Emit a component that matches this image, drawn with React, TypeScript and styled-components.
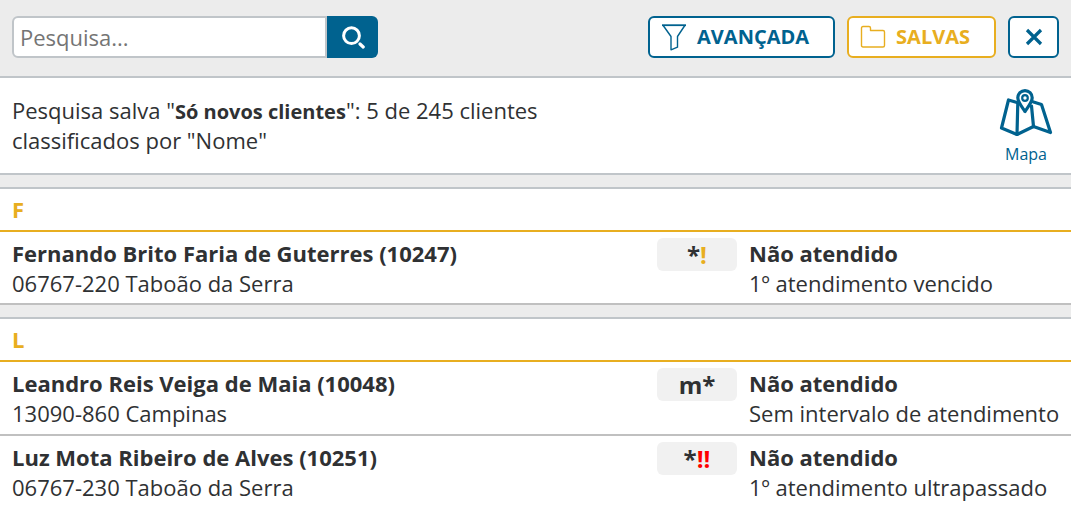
import React from "react";
import styled, { createGlobalStyle } from "styled-components";

const blue = "#00628f";
const gold = "#e8ae20";
const line = "#c0c5c9";

const GlobalStyle = createGlobalStyle`
  * { box-sizing: border-box; }
  body {
    margin: 0;
    background: #ececec;
    color: #2f3133;
    font: 22px/30px "Open Sans", "Noto Sans", sans-serif;
    overflow-x: hidden;
  }
`;

const Toolbar = styled.header`
  display: flex;
  justify-content: space-between;
  gap: 12px;
  padding: 16px 12px 18px;
  border-bottom: 2px solid ${line};
`;

const SearchForm = styled.form`
  display: flex;
  flex: 0 1 366px;
  min-width: 0;
  height: 42px;
`;

const SearchInput = styled.input`
  flex: 1;
  min-width: 0;
  padding: 0 6px;
  border: 2px solid ${line};
  border-radius: 6px 0 0 6px;
  background: #fff;
  color: inherit;
  font: inherit;
  &::placeholder { color: #757575; }
`;

const SearchButton = styled.button`
  display: flex;
  align-items: center;
  justify-content: center;
  width: 51px;
  padding: 0;
  border: 0;
  border-radius: 0 6px 6px 0;
  background: ${blue};
  color: #fff;
`;

const Actions = styled.div`
  display: flex;
  gap: 12px;
`;

const ActionButton = styled.button<{ $color: string; $compact?: boolean }>`
  display: flex;
  align-items: center;
  justify-content: center;
  gap: 10px;
  height: 42px;
  width: ${(p) => (p.$compact ? "51px" : "auto")};
  padding: ${(p) => (p.$compact ? "0" : "0 24px 0 11px")};
  border: 2px solid ${(p) => p.$color};
  border-radius: 6px;
  background: #fff;
  color: ${(p) => p.$color};
  font: bold 20px/30px "Open Sans", "Noto Sans", sans-serif;
`;

const Summary = styled.section`
  display: flex;
  justify-content: space-between;
  align-items: flex-start;
  padding: 11px 12px 6px;
  border-bottom: 2px solid ${line};
  background: #fff;
`;

const SummaryText = styled.p`
  max-width: 560px;
  margin: 6px 0 0;
  strong {
    font-size: 20px;
    line-height: 20px;
  }
`;

const MapLink = styled.a`
  display: flex;
  flex-direction: column;
  align-items: center;
  gap: 2px;
  width: 66px;
  color: ${blue};
  font-size: 16px;
  line-height: 26px;
  text-decoration: none;
`;

const Group = styled.section`
  margin-top: 12px;
  border-top: 2px solid ${line};
  border-bottom: 2px solid #c0c0c0;
  background: #fff;
`;

const GroupTitle = styled.h2`
  margin: 0;
  padding: 5px 12px 6px;
  border-bottom: 2px solid ${gold};
  color: ${gold};
  font-size: 22px;
  line-height: 30px;
`;

const ClientList = styled.ul`
  margin: 0;
  padding: 0;
  list-style: none;
`;

const ClientRow = styled.li`
  display: grid;
  grid-template-columns: minmax(0, 1fr) 80px 310px;
  column-gap: 12px;
  padding: 6px 12px 5px;
  & + & { border-top: 2px solid #c0c0c0; }
  &:not(:last-child) { padding-bottom: 6px; }
`;

const Info = styled.div`
  white-space: nowrap;
`;

const Heading = styled.div`
  font-weight: bold;
`;

const Badge = styled.div`
  height: 33px;
  border-radius: 6px;
  background: #f1f1f1;
  font-size: 24px;
  font-weight: bold;
  line-height: 34px;
  text-align: center;
`;

const Mark = styled.span<{ $color: string }>`
  color: ${(p) => p.$color};
`;

interface Client {
  name: string;
  place: string;
  flags: string;
  alert?: string;
  alertColor?: string;
  detail: string;
}

const groups: { letter: string; clients: Client[] }[] = [
  {
    letter: "F",
    clients: [
      { name: "Fernando Brito Faria de Guterres (10247)", place: "06767-220 Taboão da Serra", flags: "*", alert: "!", alertColor: gold, detail: "1º atendimento vencido" },
    ],
  },
  {
    letter: "L",
    clients: [
      { name: "Leandro Reis Veiga de Maia (10048)", place: "13090-860 Campinas", flags: "m*", detail: "Sem intervalo de atendimento" },
      { name: "Luz Mota Ribeiro de Alves (10251)", place: "06767-230 Taboão da Serra", flags: "*", alert: "!!", alertColor: "#ff0000", detail: "1º atendimento ultrapassado" },
    ],
  },
];

const SearchIcon = () => (
  <svg width="24" height="24" viewBox="0 0 24 24" fill="none" stroke="currentColor" aria-hidden="true">
    <circle cx="10.5" cy="10.7" r="7.9" strokeWidth="3" />
    <path d="M19 19 22.2 22" strokeWidth="3.2" strokeLinecap="round" />
  </svg>
);

const FunnelIcon = () => (
  <svg width="26" height="28" viewBox="0 0 26 28" fill="none" stroke="currentColor" strokeWidth="1.4" aria-hidden="true">
    <path d="M1 2.2H25" strokeWidth="1.8" />
    <path d="M2.2 2.5 10 13.5V26.8L16.5 24.2V13.5L23.8 2.5" strokeLinejoin="round" />
  </svg>
);

const FolderIcon = () => (
  <svg width="26" height="24" viewBox="0 0 26 24" fill="none" stroke="currentColor" strokeWidth="1.4" strokeLinejoin="round" aria-hidden="true">
    <path d="M3 1.5H9Q10.5 1.5 10.5 3V5.5H23Q24.5 5.5 24.5 7V20.5Q24.5 22 23 22H3Q1.5 22 1.5 20.5V3Q1.5 1.5 3 1.5Z" />
  </svg>
);

const CloseIcon = () => (
  <svg width="18" height="18" viewBox="0 0 18 18" fill="none" stroke="currentColor" strokeWidth="3.2" aria-hidden="true">
    <path d="M2 2 16 16M16 2 2 16" />
  </svg>
);

const MapIcon = () => (
  <svg width="54" height="50" viewBox="0 0 54 50" fill="none" stroke="currentColor" strokeWidth="3.2" strokeLinejoin="round" strokeLinecap="round" aria-hidden="true">
    <path d="M18 13.5 9.5 11 2.5 39 18 45.5 34.5 37.5 51.5 43.5 42.5 15.5 34.5 13" />
    <path d="M18.8 14 18 45.5M32.5 17 34.5 37.5" />
    <path d="M26 22.5C23 18 18.8 13 18.8 8.8A7.2 7.2 0 0 1 33.2 8.8C33.2 13 29 18 26 22.5Z" />
    <circle cx="26" cy="9" r="2.8" strokeWidth="2.2" />
  </svg>
);

export default function App() {
  return (
    <>
      <GlobalStyle />
      <Toolbar>
        <SearchForm role="search" onSubmit={(e) => e.preventDefault()}>
          <SearchInput type="text" placeholder="Pesquisa..." aria-label="Pesquisa" />
          <SearchButton type="submit" aria-label="Pesquisar"><SearchIcon /></SearchButton>
        </SearchForm>
        <Actions>
          <ActionButton type="button" $color={blue}><FunnelIcon />AVANÇADA</ActionButton>
          <ActionButton type="button" $color={gold}><FolderIcon />SALVAS</ActionButton>
          <ActionButton type="button" $color={blue} $compact aria-label="Fechar"><CloseIcon /></ActionButton>
        </Actions>
      </Toolbar>
      <main>
        <Summary>
          <SummaryText>
            Pesquisa salva "<strong>Só novos clientes</strong>": 5 de 245 clientes classificados por "Nome"
          </SummaryText>
          <MapLink href="#mapa"><MapIcon />Mapa</MapLink>
        </Summary>
        {groups.map((group) => (
          <Group key={group.letter}>
            <GroupTitle>{group.letter}</GroupTitle>
            <ClientList>
              {group.clients.map((c) => (
                <ClientRow key={c.name}>
                  <Info><Heading>{c.name}</Heading>{c.place}</Info>
                  <Badge>{c.flags}{c.alert && <Mark $color={c.alertColor ?? gold}>{c.alert}</Mark>}</Badge>
                  <Info><Heading>Não atendido</Heading>{c.detail}</Info>
                </ClientRow>
              ))}
            </ClientList>
          </Group>
        ))}
      </main>
    </>
  );
}
